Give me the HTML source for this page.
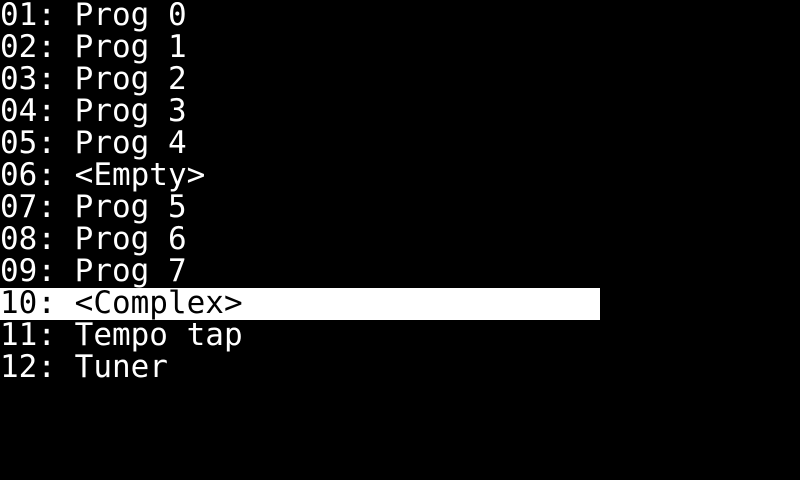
<!DOCTYPE html>
<html><head><style>
html,body{margin:0;padding:0;background:#000;width:800px;height:480px;overflow:hidden}
.l{font-family:"DejaVu Sans Mono",monospace;font-size:31px;line-height:32px;height:32px;color:#fff;white-space:pre;width:600px;margin-top:0}
.l span{position:relative;top:-1px}
.s{background:#fff;color:#000}
</style></head><body><div>
<div class="l"><span>01: Prog 0</span></div>
<div class="l"><span>02: Prog 1</span></div>
<div class="l"><span>03: Prog 2</span></div>
<div class="l"><span>04: Prog 3</span></div>
<div class="l"><span>05: Prog 4</span></div>
<div class="l"><span>06: &lt;Empty&gt;</span></div>
<div class="l"><span>07: Prog 5</span></div>
<div class="l"><span>08: Prog 6</span></div>
<div class="l"><span>09: Prog 7</span></div>
<div class="l s"><span>10: &lt;Complex&gt;</span></div>
<div class="l"><span>11: Tempo tap</span></div>
<div class="l"><span>12: Tuner</span></div>
</div></body></html>
